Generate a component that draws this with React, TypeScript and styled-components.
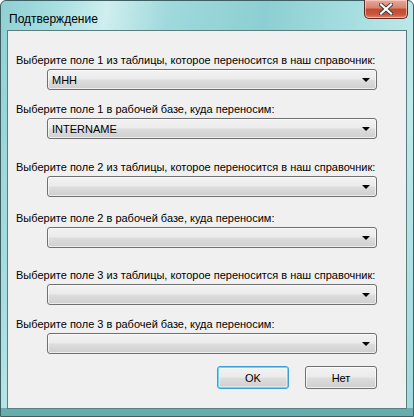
import React from "react";
import styled, { createGlobalStyle } from "styled-components";

const Global = createGlobalStyle`
  html, body { margin: 0; padding: 0; background: #ffffff; }
  body { font-family: "Liberation Sans", Arial, sans-serif; }
  * { box-sizing: border-box; }
`;

const Window = styled.div`
  width: 414px;
  height: 417px;
  border: 1px solid #3e5f63;
  border-radius: 6px 6px 0 0;
  background: linear-gradient(
    100deg,
    #8fd0d3 0%,
    #a8dfe1 12%,
    #cfeeef 22%,
    #9fd9dc 35%,
    #8ccfd2 55%,
    #a9e0e2 75%,
    #c0e9ea 88%,
    #9ed8db 100%
  );
  display: flex;
  flex-direction: column;
  padding: 0 6px 7px 6px;
  box-shadow: inset 0 -8px 0 0 #68adad;
`;

const TitleBar = styled.div`
  height: 29px;
  display: flex;
  align-items: flex-start;
  justify-content: space-between;
`;

const Title = styled.div`
  font-family: "Liberation Sans", Arial, sans-serif;
  font-size: 12px;
  color: #000;
  padding: 11px 0 0 2px;
`;

const CloseButton = styled.div`
  width: 44px;
  height: 19px;
  margin-right: -1px;
  margin-top: -1px;
  border: 1px solid #5d2a25;
  border-top: none;
  border-radius: 0 0 5px 5px;
  background: linear-gradient(
    180deg,
    #e8a899 0%,
    #d9826f 45%,
    #c24a33 50%,
    #c9553c 80%,
    #e0866e 100%
  );
  box-shadow: inset 0 0 0 1px rgba(255, 220, 210, 0.6);
  display: flex;
  align-items: center;
  justify-content: center;
`;

const Client = styled.div`
  flex: 1;
  background: #f0f0f0;
  border: 1px solid #5a7d80;
  display: flex;
  flex-direction: column;
  padding: 23px 0 0 8px;
`;

const Field = styled.div<{ $gap: number }>`
  display: flex;
  flex-direction: column;
  margin-top: ${(p) => p.$gap}px;
`;

const Label = styled.div`
  font-family: "Liberation Sans", Arial, sans-serif;
  font-size: 11px;
  line-height: 13px;
  color: #000;
  height: 15px;
`;

const Combo = styled.div`
  margin-left: 31px;
  width: 330px;
  height: 21px;
  border: 1px solid #707070;
  border-radius: 3px;
  background: linear-gradient(180deg, #f2f2f2 0%, #ebebeb 48%, #dddddd 52%, #cfcfcf 100%);
  box-shadow: inset 0 0 0 1px rgba(255, 255, 255, 0.6);
  display: flex;
  align-items: center;
  justify-content: space-between;
  padding: 0 5px 0 4px;
  font-family: "Liberation Sans", Arial, sans-serif;
  font-size: 11px;
  color: #000;
`;

const Arrow = styled.div`
  width: 0;
  height: 0;
  border-left: 4px solid transparent;
  border-right: 4px solid transparent;
  border-top: 4px solid #000;
  margin-right: 1px;
`;

const Buttons = styled.div`
  display: flex;
  justify-content: flex-end;
  gap: 16px;
  margin-top: 12px;
  padding-right: 29px;
`;

const Button = styled.div<{ $focused?: boolean }>`
  width: 72px;
  height: 23px;
  border: 1px solid ${(p) => (p.$focused ? "#3c9fd6" : "#707070")};
  border-radius: 3px;
  background: linear-gradient(180deg, #f2f2f2 0%, #ebebeb 48%, #dddddd 52%, #cfcfcf 100%);
  box-shadow: ${(p) =>
    p.$focused
      ? "inset 0 0 0 1px #6fd4f5, inset 0 0 0 2px rgba(255,255,255,0.4)"
      : "inset 0 0 0 1px rgba(255,255,255,0.7)"};
  display: flex;
  align-items: center;
  justify-content: center;
  font-family: "Liberation Sans", Arial, sans-serif;
  font-size: 11px;
  color: #000;
`;

const fields = [
  { label: "Выберите поле 1 из таблицы, которое переносится в наш справочник:", value: "МНН", gap: 0 },
  { label: "Выберите поле 1 в рабочей базе, куда переносим:", value: "INTERNAME", gap: 13 },
  { label: "Выберите поле 2 из таблицы, которое переносится в наш справочник:", value: "", gap: 22 },
  { label: "Выберите поле 2 в рабочей базе, куда переносим:", value: "", gap: 15 },
  { label: "Выберите поле 3 из таблицы, которое переносится в наш справочник:", value: "", gap: 21 },
  { label: "Выберите поле 3 в рабочей базе, куда переносим:", value: "", gap: 13 },
];

export default function App() {
  return (
    <>
      <Global />
      <Window>
        <TitleBar>
          <Title>Подтверждение</Title>
          <CloseButton>
            <svg width="14" height="12" viewBox="0 0 14 12">
              <path
                d="M2 1.5 L12 10.5 M12 1.5 L2 10.5"
                stroke="#3a3a3a"
                strokeWidth="4"
                strokeLinecap="square"
              />
              <path
                d="M2 1.5 L12 10.5 M12 1.5 L2 10.5"
                stroke="#ffffff"
                strokeWidth="2.2"
                strokeLinecap="square"
              />
            </svg>
          </CloseButton>
        </TitleBar>
        <Client>
          {fields.map((f, i) => (
            <Field key={i} $gap={f.gap}>
              <Label>{f.label}</Label>
              <Combo>
                <span>{f.value}</span>
                <Arrow />
              </Combo>
            </Field>
          ))}
          <Buttons>
            <Button $focused>OK</Button>
            <Button>Нет</Button>
          </Buttons>
        </Client>
      </Window>
    </>
  );
}
